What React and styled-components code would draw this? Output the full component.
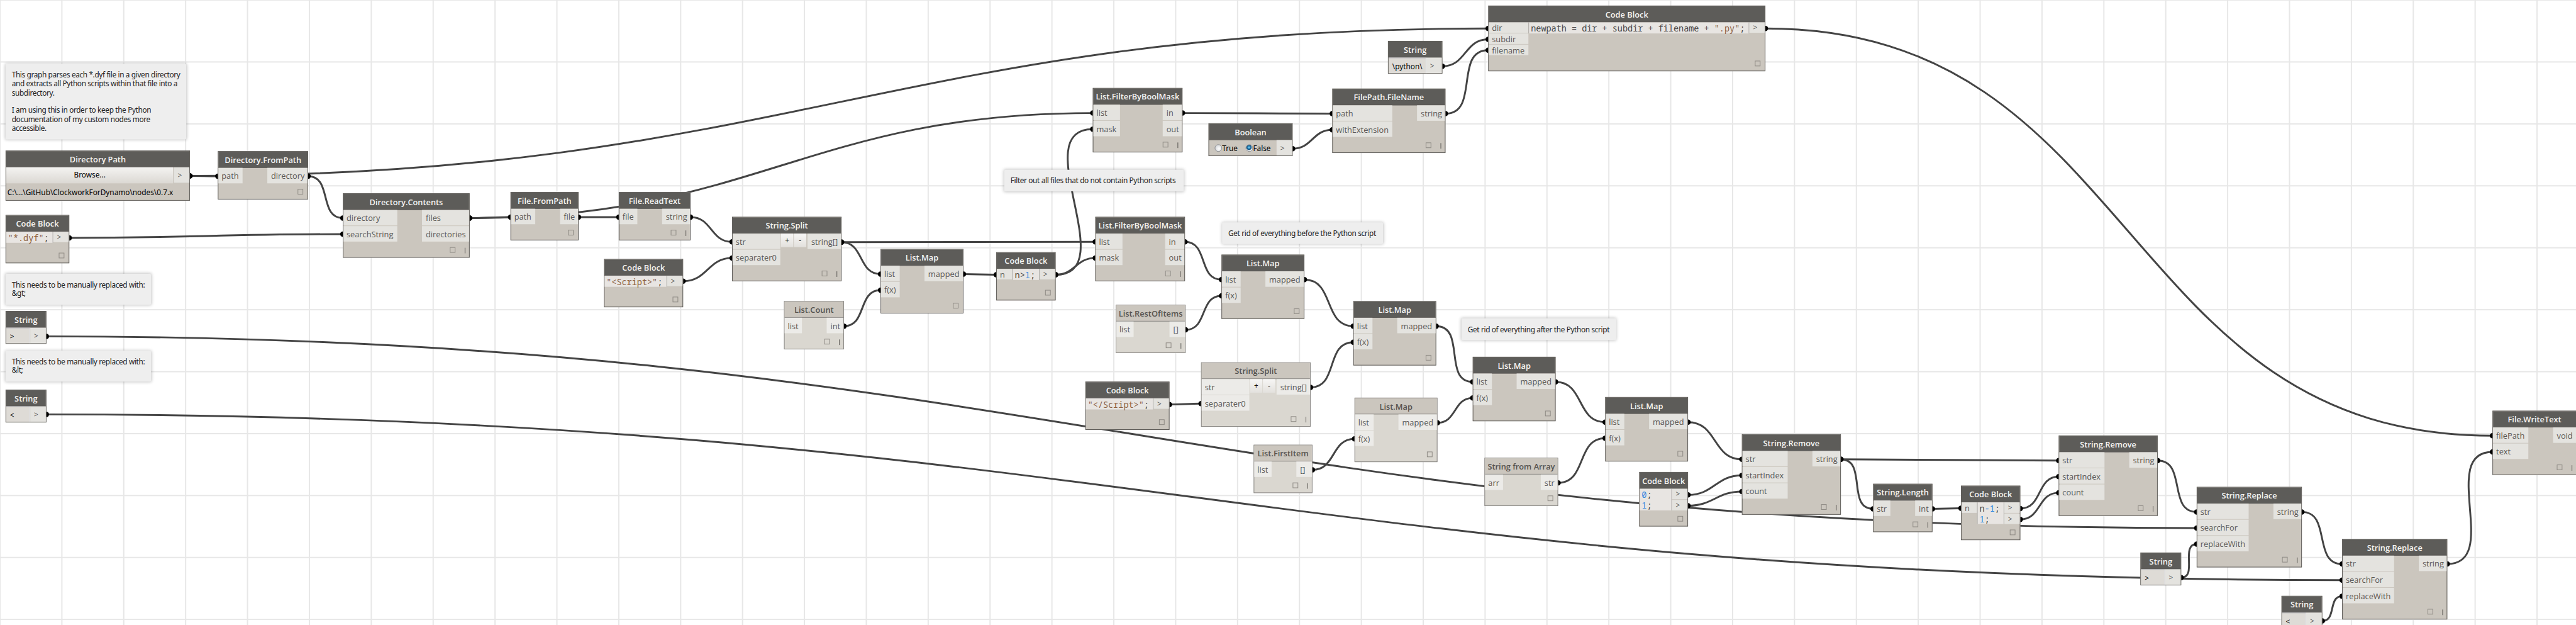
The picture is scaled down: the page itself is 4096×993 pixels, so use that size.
import React from "react";
import styled, { createGlobalStyle, css } from "styled-components";

const WIDTH = 4163;
const HEIGHT = 1009;

const GlobalStyle = createGlobalStyle`
  * { box-sizing: border-box; }
  html, body { margin: 0; padding: 0; background: #fff; overflow: hidden; }
`;

const Viewport = styled.main`
  position: relative;
  width: 4096px;
  height: 993px;
  overflow: hidden;
  background: #fff;
`;

const Workspace = styled.div`
  position: relative;
  width: ${WIDTH}px;
  height: ${HEIGHT}px;
  overflow: hidden;
  transform: scale(${4096 / WIDTH}, ${993 / HEIGHT});
  transform-origin: 0 0;
  background-color: #fff;
  background-image:
    linear-gradient(to right, #e7e7e7 2px, transparent 2px),
    linear-gradient(to bottom, #e7e7e7 2px, transparent 2px);
  background-size: 100px 100px;
  background-position: -1px -1px;
  font-family: "Open Sans", "Liberation Sans", sans-serif;
`;

const Wires = styled.svg`
  position: absolute;
  inset: 0;
  width: ${WIDTH}px;
  height: ${HEIGHT}px;
`;

const Note = styled.p`
  position: absolute;
  left: ${(p) => p.$x}px;
  top: ${(p) => p.$y}px;
  width: ${(p) => p.$w}px;
  height: ${(p) => p.$h}px;
  margin: 0;
  padding: 11px 0 0 10px;
  border-radius: 2px;
  background: #eee;
  box-shadow: 0 0 5px rgba(0, 0, 0, 0.24);
  color: #222;
  font: 12px/14.33px "Noto Sans", sans-serif;
  letter-spacing: -0.36px;
  white-space: pre;
`;

const light = {
  border: "#858380",
  header: "#cbc6be",
  title: "#56534f",
  body: "#dad7d0",
  port: "#ecebe8",
};
const dark = {
  border: "#5e5c59",
  header: "#5d5c59",
  title: "#f6f5f3",
  body: "#cbc6be",
  port: "#e4e3df",
};
const tone = (key) => (p) => (p.$light ? light : dark)[key];

const Frame = styled.section`
  position: absolute;
  left: ${(p) => p.$x}px;
  top: ${(p) => p.$y}px;
  width: ${(p) => p.$w}px;
  height: ${(p) => p.$h}px;
  display: flex;
  flex-direction: column;
  border: 1px solid ${tone("border")};
  background: ${tone("body")};
`;

const Title = styled.h2`
  flex: none;
  height: 26px;
  margin: 0;
  background: ${tone("header")};
  border-bottom: 1px solid ${tone("border")};
  color: ${tone("title")};
  font-size: 13px;
  font-weight: 600;
  line-height: 26px;
  text-align: center;
  white-space: nowrap;
`;

const Body = styled.div`
  display: flex;
  align-items: flex-start;
`;

const Spacer = styled.div`
  flex: 1;
`;

const Column = styled.div`
  display: flex;
  flex-direction: column;
  flex: none;
  gap: 1px;
  width: ${(p) => p.$w}px;
`;

const Port = styled.div`
  height: ${(p) => (p.$compact ? 17 : 25)}px;
  padding-left: ${(p) => (p.$output ? 6 : 5)}px;
  background: ${tone("port")};
  color: #595755;
  font-size: 13px;
  line-height: ${(p) => (p.$compact ? 18 : 26)}px;
  white-space: nowrap;
`;

const Arrow = styled(Port)`
  padding: 0 0 0 6px;
  font-size: 12px;
  line-height: ${(p) => (p.$compact ? 18 : 27)}px;
`;

const Editor = styled.pre`
  flex: 1;
  height: ${(p) => (p.$lines > 1 ? 35 : 18)}px;
  margin: 0;
  padding: 1px 0 0 3px;
  background: #e8e5e2;
  border-right: 1px solid #a9a7a3;
  ${(p) => p.$ruled && css`
    border-left: 1px solid #a9a7a3;
  `}
  color: #4a4846;
  font: 13.72px/17px "Noto Sans Mono", "DejaVu Sans Mono", monospace;
  white-space: pre;
`;

const Quoted = styled.span`
  color: #8b5e3f;
`;

const Numeral = styled.span`
  color: #3389e0;
`;

const Footer = styled.footer`
  display: flex;
  justify-content: flex-end;
  align-items: flex-end;
  margin-top: auto;
  padding: 0 ${(p) => (p.$lacing ? 6 : 7)}px 7px 0;
`;

const PreviewToggle = styled.i`
  width: 9px;
  height: 9px;
  border: 1px solid #8d8983;
`;

const Lacing = styled.i`
  width: 1px;
  height: 9px;
  margin: 0 0 -1px 15px;
  background: #55534f;
`;

const StepButton = styled.button`
  flex: none;
  width: 20px;
  height: 22px;
  margin-left: 1px;
  padding: 0;
  border: 0;
  background: linear-gradient(#f7f6f5, #e3e1dd);
  color: #111;
  font: 12px/20px "Noto Sans", sans-serif;
`;

const TextInput = styled.div`
  flex: 1;
  height: 25px;
  padding-left: 6px;
  border-top: 1px solid #b4b4ba;
  border-right: 1px solid #dfe1ec;
  background: #dedbd6;
  color: #000;
  font: 12px/27px "Noto Sans", sans-serif;
  white-space: pre;
`;

const Browse = styled.button`
  flex: 1;
  height: 26px;
  margin: 0;
  padding: 0;
  border: 0;
  border-right: 1px solid #c4c0b9;
  background: linear-gradient(#f4f3f1, #dbd8d3);
  color: #000;
  font: 12px/24px "Noto Sans", sans-serif;
`;

const PathText = styled.div`
  padding-left: 2px;
  color: #000;
  font: 12px/29px "Noto Sans", sans-serif;
  white-space: nowrap;
`;

const Choices = styled.div`
  flex: 1;
  display: flex;
  align-items: center;
  height: 25px;
  padding-left: 9px;
  color: #000;
  font: 12px/25px "Noto Sans", sans-serif;
`;

const Choice = styled.span`
  display: flex;
  align-items: center;
  width: 50px;
  padding-top: 2px;
  white-space: nowrap;
`;

const Radio = styled.i`
  flex: none;
  width: 12px;
  height: 12px;
  margin: 0 0 2px;
  border: 1px solid #8c8f94;
  border-radius: 50%;
  background: ${(p) =>
    p.$on
      ? "radial-gradient(circle at 45% 40%, #9fe0fa 0, #2b8fc4 22%, #0f4a78 46%, #e9eef2 58%)"
      : "radial-gradient(circle at 60% 60%, #fdfdfd, #c9ccd0)"};
`;

const foot = (lacing) => (
  <Footer $lacing={lacing}>
    <PreviewToggle />
    {lacing && <Lacing />}
  </Footer>
);

function FunctionNode({ x, y, w, title, ins, outs, lw, rw, partial, lacing, steps }) {
  return (
    <Frame $x={x} $y={y} $w={w} $h={52 + 26 * ins.length} $light={partial}>
      <Title $light={partial}>{title}</Title>
      <Body>
        <Column $w={lw}>
          {ins.map((t) => <Port key={t} $light={partial}>{t}</Port>)}
        </Column>
        {steps && (
          <>
            <StepButton>+</StepButton>
            <StepButton>-</StepButton>
          </>
        )}
        <Spacer />
        <Column $w={rw}>
          {outs.map((t) => <Port key={t} $output $light={partial}>{t}</Port>)}
        </Column>
      </Body>
      {foot(lacing)}
    </Frame>
  );
}

function CodeBlock({ x, y, w, h, ins = [], lw, code, outs = 1 }) {
  return (
    <Frame $x={x} $y={y} $w={w} $h={h}>
      <Title>Code Block</Title>
      <Body>
        {ins.length > 0 && (
          <Column $w={lw}>
            {ins.map((t) => <Port key={t} $compact>{t}</Port>)}
          </Column>
        )}
        <Editor $lines={outs} $ruled={ins.length > 0}>{code}</Editor>
        <Column $w={25}>
          {Array.from({ length: outs }, (_, i) => <Arrow key={i} $compact>&gt;</Arrow>)}
        </Column>
      </Body>
      {foot(false)}
    </Frame>
  );
}

function StringNode({ x, y, w = 66, value }) {
  return (
    <Frame $x={x} $y={y} $w={w} $h={53}>
      <Title>String</Title>
      <Body>
        <TextInput>{value}</TextInput>
        <Column $w={25}><Arrow>&gt;</Arrow></Column>
      </Body>
    </Frame>
  );
}

const map = (x, y, partial) => ({
  x, y, w: 134, title: "List.Map", ins: ["list", "f(x)"], outs: ["mapped"], lw: 30, rw: 62, partial,
});

const functionNodes = [
  { x: 352, y: 244, w: 146, title: "Directory.FromPath", ins: ["path"], outs: ["directory"], lw: 39, rw: 65 },
  { x: 554, y: 312, w: 205, title: "Directory.Contents", ins: ["directory", "searchString"], outs: ["files", "directories"], lw: 87, rw: 76, lacing: true },
  { x: 825, y: 310, w: 110, title: "File.FromPath", ins: ["path"], outs: ["file"], lw: 39, rw: 29 },
  { x: 1000, y: 310, w: 116, title: "File.ReadText", ins: ["file"], outs: ["string"], lw: 29, rw: 45, lacing: true },
  { x: 1183, y: 350, w: 177, title: "String.Split", ins: ["str", "separater0"], outs: ["string[]"], lw: 77, rw: 54, lacing: true, steps: true },
  map(1423, 402),
  { x: 1267, y: 486, w: 97, title: "List.Count", ins: ["list"], outs: ["int"], lw: 28, rw: 27, lacing: true, partial: true },
  { x: 1766, y: 142, w: 145, title: "List.FilterByBoolMask", ins: ["list", "mask"], outs: ["in", "out"], lw: 43, rw: 31, lacing: true },
  { x: 1770, y: 350, w: 145, title: "List.FilterByBoolMask", ins: ["list", "mask"], outs: ["in", "out"], lw: 43, rw: 31, lacing: true },
  { x: 2153, y: 143, w: 183, title: "FilePath.FileName", ins: ["path", "withExtension"], outs: ["string"], lw: 96, rw: 45, lacing: true },
  map(1974, 411),
  { x: 1803, y: 492, w: 113, title: "List.RestOfItems", ins: ["list"], outs: ["[]"], lw: 28, rw: 25, lacing: true, partial: true },
  map(2187, 486),
  { x: 1941, y: 585, w: 177, title: "String.Split", ins: ["str", "separater0"], outs: ["string[]"], lw: 77, rw: 54, lacing: true, steps: true, partial: true },
  map(2189, 642, true),
  { x: 2026, y: 718, w: 95, title: "List.FirstItem", ins: ["list"], outs: ["[]"], lw: 28, rw: 25, lacing: true, partial: true },
  map(2380, 576),
  map(2594, 641),
  { x: 2399, y: 739, w: 119, title: "String from Array", ins: ["arr"], outs: ["str"], lw: 29, rw: 27, partial: true },
  { x: 2815, y: 701, w: 160, title: "String.Remove", ins: ["str", "startIndex", "count"], outs: ["string"], lw: 73, rw: 45, lacing: true },
  { x: 3027, y: 781, w: 96, title: "String.Length", ins: ["str"], outs: ["int"], lw: 27, rw: 27, lacing: true },
  { x: 3327, y: 703, w: 160, title: "String.Remove", ins: ["str", "startIndex", "count"], outs: ["string"], lw: 73, rw: 45, lacing: true },
  { x: 3550, y: 786, w: 170, title: "String.Replace", ins: ["str", "searchFor", "replaceWith"], outs: ["string"], lw: 83, rw: 45, lacing: true },
  { x: 3785, y: 870, w: 170, title: "String.Replace", ins: ["str", "searchFor", "replaceWith"], outs: ["string"], lw: 83, rw: 45, lacing: true },
  { x: 4028, y: 663, w: 136, title: "File.WriteText", ins: ["filePath", "text"], outs: ["void"], lw: 57, rw: 37, lacing: true },
];

const codeBlocks = [
  { x: 9, y: 347, w: 103, h: 78, code: <><Quoted>"*.dyf"</Quoted>;</> },
  { x: 976, y: 418, w: 128, h: 78, code: <><Quoted>"&lt;Script&gt;"</Quoted>;</> },
  { x: 1610, y: 407, w: 96, h: 78, ins: ["n"], lw: 25, code: <>n&gt;<Numeral>1</Numeral>;</> },
  { x: 1754, y: 616, w: 136, h: 78, code: <><Quoted>"&lt;/Script&gt;"</Quoted>;</> },
  { x: 2405, y: 9, w: 448, h: 106, ins: ["dir", "subdir", "filename"], lw: 64, code: <>newpath = dir + subdir + filename + <Quoted>".py"</Quoted>;</> },
  { x: 2649, y: 762, w: 79, h: 88, outs: 2, code: <><Numeral>0</Numeral>;{"\n"}<Numeral>1</Numeral>;</> },
  { x: 3169, y: 784, w: 96, h: 88, outs: 2, ins: ["n"], lw: 25, code: <>n<Numeral>-1</Numeral>;{"\n"}<Numeral>1</Numeral>;</> },
];

const stringNodes = [
  { x: 9, y: 502, value: ">" },
  { x: 9, y: 629, value: "<" },
  { x: 2243, y: 66, w: 88, value: "\\python\\" },
  { x: 3459, y: 892, value: ">" },
  { x: 3687, y: 962, value: "<" },
];

const notes = [
  { x: 9, y: 103, w: 292, h: 122, text: "This graph parses each *.dyf file in a given directory\nand extracts all Python scripts within that file into a\nsubdirectory.\n\nI am using this in order to keep the Python\ndocumentation of my custom nodes more\naccessible." },
  { x: 9, y: 442, w: 235, h: 50, text: "This needs to be manually replaced with:\n&gt;" },
  { x: 9, y: 566, w: 235, h: 50, text: "This needs to be manually replaced with:\n&lt;" },
  { x: 1623, y: 274, w: 290, h: 35, text: "Filter out all files that do not contain Python scripts" },
  { x: 1975, y: 359, w: 260, h: 35, text: "Get rid of everything before the Python script" },
  { x: 2362, y: 514, w: 250, h: 35, text: "Get rid of everything after the Python script" },
];

// Each wire runs from an output pin to an input pin: [x0, y0, x1, y1].
const wires = [
  [307, 284, 352, 284.5],
  [307, 284, 2405, 46],
  [498, 284.5, 554, 352],
  [112, 384, 554, 378],
  [759, 352, 825, 350.5],
  [759, 352, 1766, 182.5],
  [935, 350.5, 1000, 350.5],
  [1116, 350.5, 1183, 390.5],
  [1104, 454, 1183, 416.5],
  [1360, 391, 1423, 442.5],
  [1360, 391, 1770, 390.5],
  [1364, 526.5, 1423, 468.5],
  [1557, 442.5, 1610, 443.5],
  [1706, 443.5, 1770, 416.5],
  [1706, 443.5, 1766, 208.5],
  [1911, 182.5, 2153, 183.5],
  [2089, 240, 2153, 209.5],
  [2336, 183.5, 2405, 81],
  [2331, 107, 2405, 63.5],
  [2853, 46, 4028, 703.5],
  [1915, 390.5, 1974, 451.5],
  [1916, 532.5, 1974, 477.5],
  [2108, 451.5, 2187, 526.5],
  [2118, 625.5, 2187, 552.5],
  [1890, 653, 1941, 651.5],
  [2321, 526.5, 2380, 616.5],
  [2323, 682.5, 2380, 642.5],
  [2121, 758.5, 2189, 708.5],
  [2514, 616.5, 2594, 681.5],
  [2518, 779.5, 2594, 707.5],
  [2728, 681.5, 2815, 741.5],
  [2728, 799, 2815, 767.5],
  [2728, 816.5, 2815, 793.5],
  [2975, 741.5, 3027, 821.5],
  [2975, 741.5, 3327, 743.5],
  [3123, 821.5, 3169, 820.5],
  [3265, 821, 3327, 769.5],
  [3265, 838.5, 3327, 795.5],
  [3487, 743.5, 3550, 826.5],
  [3525, 932.5, 3550, 878.5],
  [3720, 826.5, 3785, 910.5],
  [3753, 1002.5, 3785, 962.5],
  [3955, 910.5, 4028, 729.5],
  [75, 543, 3550, 852.5],
  [75, 669, 3785, 936.5],
];

function wirePath([x0, y0, x1, y1]) {
  const reach = 0.45 * Math.hypot(x1 - x0, y1 - y0);
  return `M${x0} ${y0}C${x0 + reach} ${y0} ${x1 - reach} ${y1} ${x1} ${y1}`;
}

export default function App() {
  return (
    <>
      <GlobalStyle />
      <Viewport>
        <Workspace>
          <Wires viewBox={`0 0 ${WIDTH} ${HEIGHT}`}>
            <g fill="none" stroke="#444444" strokeWidth="3">
              {wires.map((w, i) => <path key={i} d={wirePath(w)} />)}
            </g>
            <g fill="#000">
              {wires.map(([x0, y0, x1, y1], i) => (
                <g key={i}>
                  <circle cx={x0} cy={y0} r="4.3" />
                  <circle cx={x1} cy={y1} r="4.3" />
                </g>
              ))}
            </g>
          </Wires>

          <Frame $x={9} $y={243} $w={298} $h={81}>
            <Title>Directory Path</Title>
            <Body>
              <Browse>Browse...</Browse>
              <Column $w={25}><Arrow>&gt;</Arrow></Column>
            </Body>
            <PathText>C:\...\GitHub\ClockworkForDynamo\nodes\0.7.x</PathText>
          </Frame>

          <Frame $x={1953} $y={199} $w={136} $h={53}>
            <Title>Boolean</Title>
            <Body>
              <Choices>
                <Choice><Radio />True</Choice>
                <Choice><Radio $on />False</Choice>
              </Choices>
              <Column $w={25}><Arrow>&gt;</Arrow></Column>
            </Body>
          </Frame>

          {functionNodes.map((n) => <FunctionNode key={`${n.x}-${n.y}`} {...n} />)}
          {codeBlocks.map((n) => <CodeBlock key={`${n.x}-${n.y}`} {...n} />)}
          {stringNodes.map((n) => <StringNode key={`${n.x}-${n.y}`} {...n} />)}
          {notes.map((n) => (
            <Note key={`${n.x}-${n.y}`} $x={n.x} $y={n.y} $w={n.w} $h={n.h}>{n.text}</Note>
          ))}
        </Workspace>
      </Viewport>
    </>
  );
}
